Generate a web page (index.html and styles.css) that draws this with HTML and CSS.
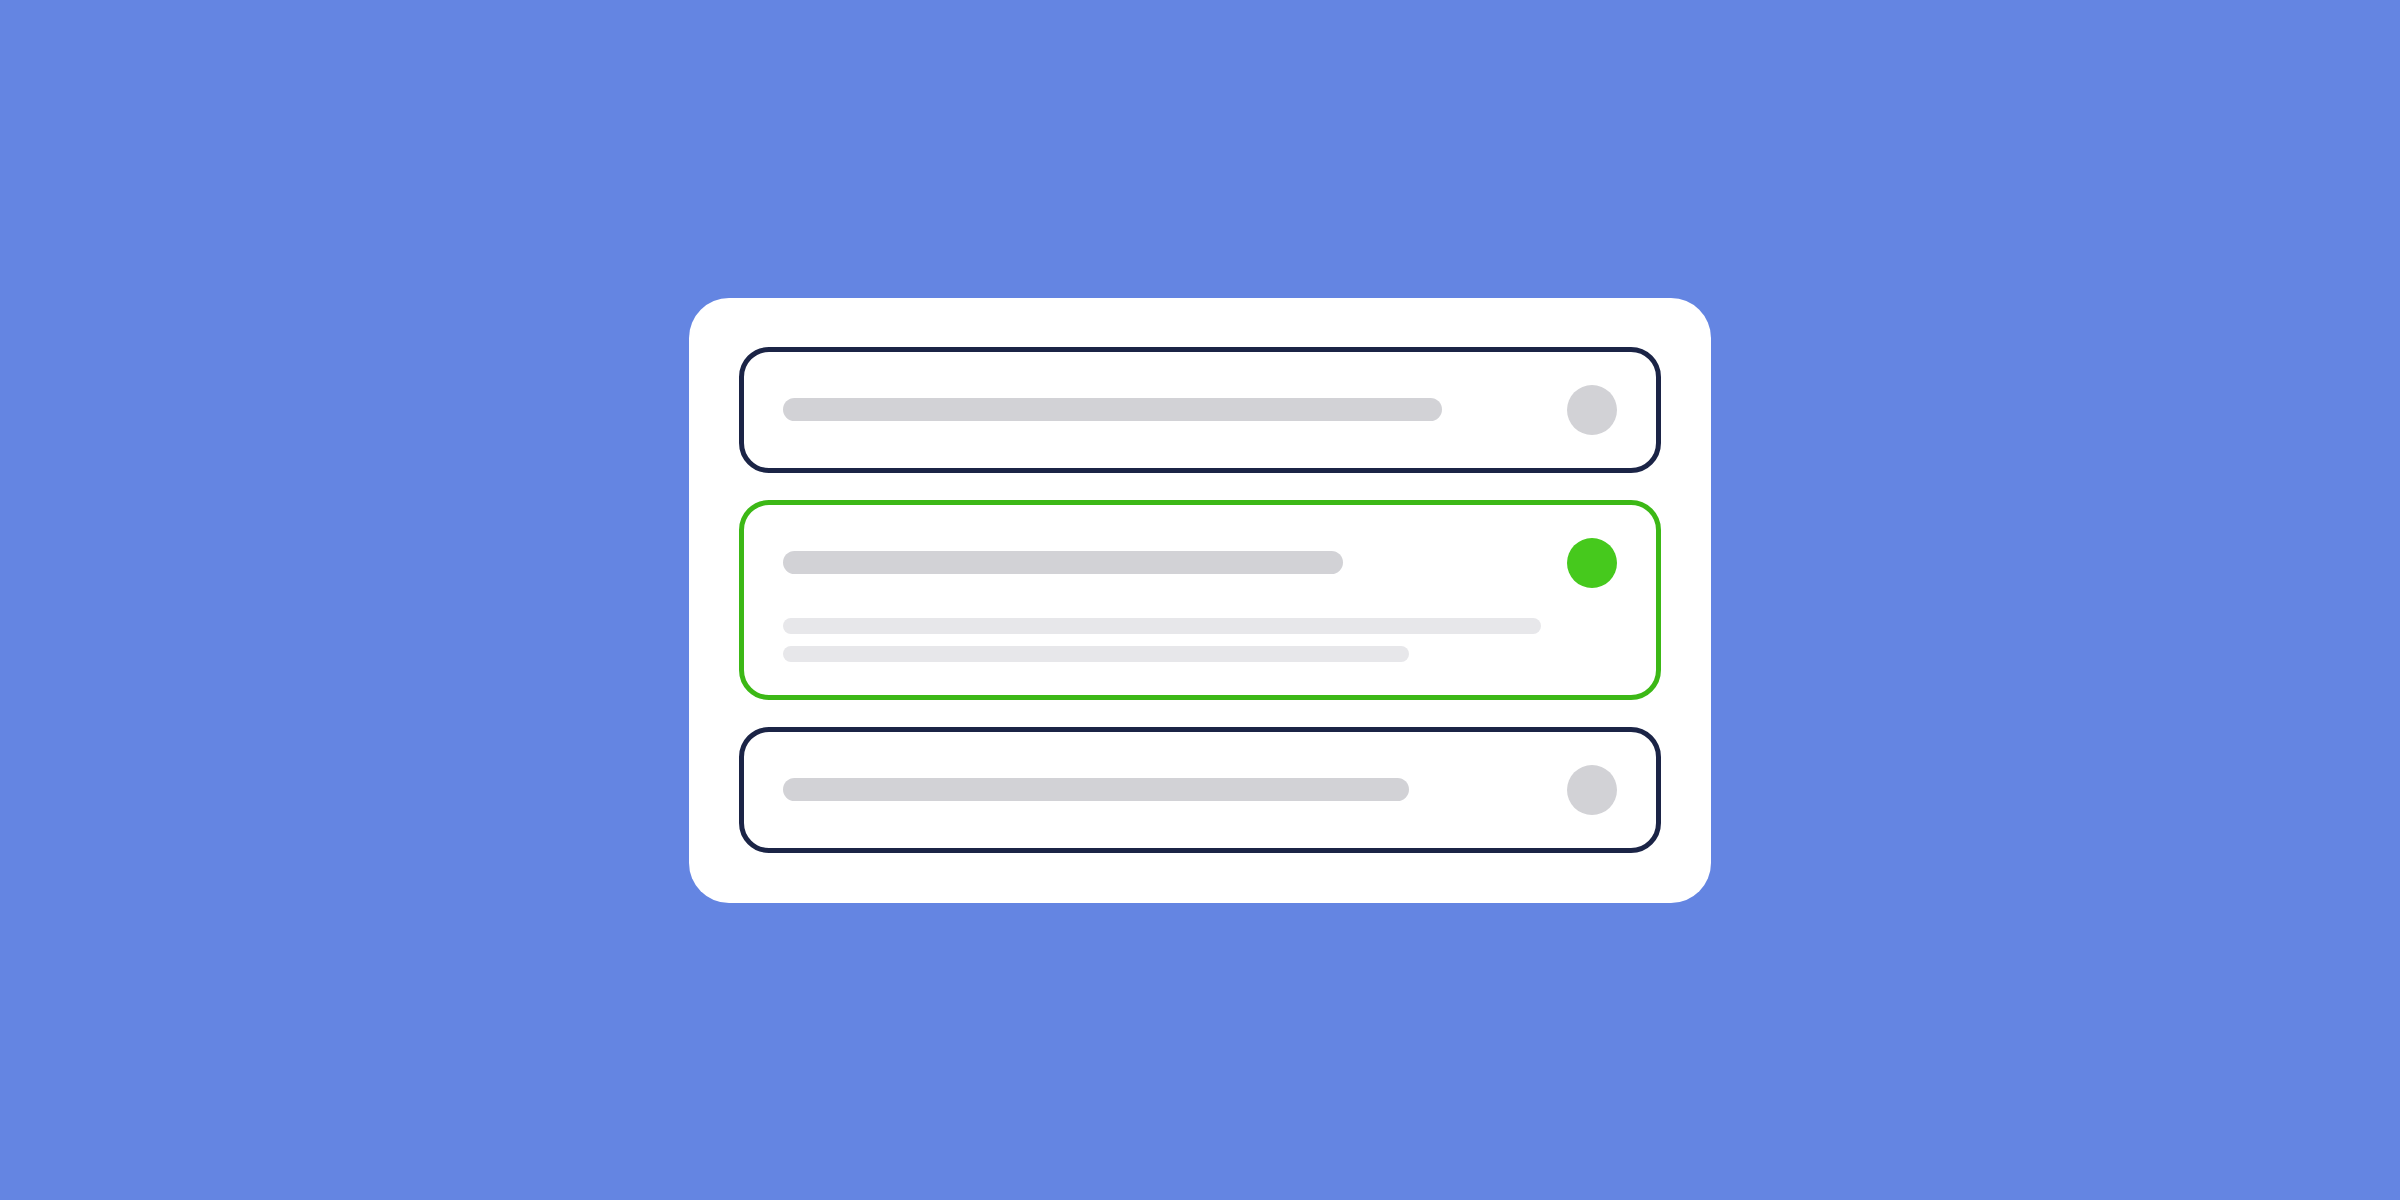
FILE: index.html
```html
<!DOCTYPE html>
<html lang="en">
<head>
<meta charset="utf-8">
<title>Accordion list</title>
<link rel="stylesheet" href="styles.css">
</head>
<body>
<main class="stage">
  <section class="panel">
    <div class="item">
      <div class="item-head">
        <span class="line line-title" style="width:659px"></span>
        <span class="dot"></span>
      </div>
    </div>
    <div class="item item-open">
      <div class="item-head">
        <span class="line line-title" style="width:560px"></span>
        <span class="dot dot-on"></span>
      </div>
      <div class="item-body">
        <span class="line line-text" style="width:758px"></span>
        <span class="line line-text" style="width:626px"></span>
      </div>
    </div>
    <div class="item">
      <div class="item-head">
        <span class="line line-title" style="width:626px"></span>
        <span class="dot"></span>
      </div>
    </div>
  </section>
</main>
</body>
</html>
```

FILE: styles.css
```css
html, body {
  margin: 0;
  padding: 0;
}

body {
  background: #6485e2;
  font-family: "Liberation Sans", Arial, sans-serif;
}

.stage {
  width: 2400px;
  height: 1200px;
  display: flex;
  align-items: center;
  justify-content: center;
}

.panel {
  width: 1022px;
  box-sizing: border-box;
  padding: 49px 50px 50px;
  background: #ffffff;
  border-radius: 40px;
  display: flex;
  flex-direction: column;
  gap: 27px;
}

.item {
  border: 5px solid #1b2446;
  border-radius: 30px;
  padding: 33px 39px;
  display: flex;
  flex-direction: column;
}

.item-open {
  border-color: #3cb816;
}

.item-head {
  height: 50px;
  display: flex;
  align-items: center;
  justify-content: space-between;
}

.item-body {
  margin-top: 30px;
  display: flex;
  flex-direction: column;
  gap: 12px;
}

.line {
  display: block;
  border-radius: 12px;
}

.line-title {
  height: 23px;
  background: #d2d2d6;
}

.line-text {
  height: 16px;
  background: #e7e7ea;
  border-radius: 8px;
}

.dot {
  width: 50px;
  height: 50px;
  border-radius: 50%;
  background: #d2d2d6;
  flex: none;
}

.dot-on {
  background: #46c91d;
}
```
